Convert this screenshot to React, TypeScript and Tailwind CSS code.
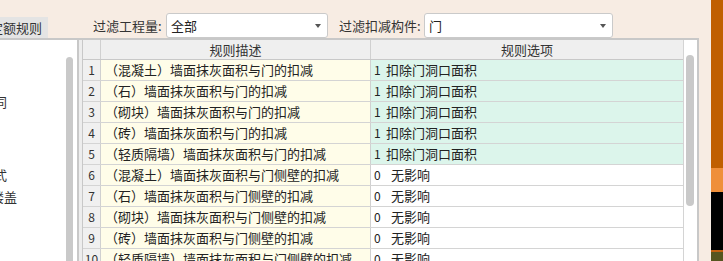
import React from 'react';

const rows = [
  { desc: '（混凝土）墙面抹灰面积与门的扣减', code: '1', opt: '扣除门洞口面积' },
  { desc: '（石）墙面抹灰面积与门的扣减', code: '1', opt: '扣除门洞口面积' },
  { desc: '（砌块）墙面抹灰面积与门的扣减', code: '1', opt: '扣除门洞口面积' },
  { desc: '（砖）墙面抹灰面积与门的扣减', code: '1', opt: '扣除门洞口面积' },
  { desc: '（轻质隔墙）墙面抹灰面积与门的扣减', code: '1', opt: '扣除门洞口面积' },
  { desc: '（混凝土）墙面抹灰面积与门侧壁的扣减', code: '0', opt: '无影响' },
  { desc: '（石）墙面抹灰面积与门侧壁的扣减', code: '0', opt: '无影响' },
  { desc: '（砌块）墙面抹灰面积与门侧壁的扣减', code: '0', opt: '无影响' },
  { desc: '（砖）墙面抹灰面积与门侧壁的扣减', code: '0', opt: '无影响' },
  { desc: '（轻质隔墙）墙面抹灰面积与门侧壁的扣减', code: '0', opt: '无影响' },
];

function Select({ value, width }: { value: string; width: string }) {
  return (
    <div className={`${width} h-[25px] bg-white border border-[#cacaca] rounded-[3px] flex items-center justify-between pl-[4px] pr-[6px]`}>
      <span className="text-[13px] text-[#222]">{value}</span>
      <span className="w-0 h-0 border-l-[3px] border-r-[3px] border-t-[4px] border-l-transparent border-r-transparent border-t-[#555]" />
    </div>
  );
}

export default function App() {
  return (
    <div
      className="w-[723px] h-[261px] overflow-hidden flex bg-[#f7ece3] text-[#222]"
      style={{ fontFamily: '"Noto Sans CJK SC", "Noto Sans", sans-serif' }}
    >
      {/* main */}
      <div className="w-[711px] flex flex-col">
        {/* filter bar */}
        <div className="h-[38px] flex items-end shrink-0">
          <div className="w-[62px] -ml-[14px] h-[21px] bg-[#e4e4e4] flex items-center pl-[4px] text-[13px] text-[#333] whitespace-nowrap">
            定额规则
          </div>
          <div className="flex items-center h-[25px] ml-[45px]">
            <span className="text-[13px] text-[#333] w-[73px]">过滤工程量:</span>
            <Select value="全部" width="w-[162px]" />
            <span className="text-[13px] text-[#333] ml-[11px] w-[85px]">过滤扣减构件:</span>
            <Select value="门" width="w-[189px]" />
          </div>
        </div>

        {/* body */}
        <div className="flex flex-1 w-[699px] border-t-2 border-[#c8c8c8] overflow-hidden">
          {/* left tree */}
          <div className="w-[77px] bg-white flex shrink-0">
            <div className="w-[66px] overflow-hidden text-[13px] text-[#333]">
              <div className="mt-[51px] h-[22px] leading-[22px] -ml-[19px] whitespace-nowrap">相同</div>
              <div className="mt-[51px] h-[22px] leading-[22px] -ml-[19px] whitespace-nowrap">方式</div>
              <div className="h-[22px] leading-[22px] -ml-[9px] whitespace-nowrap">楼盖</div>
            </div>
            <div className="w-[11px]">
              <div className="w-[7px] h-[260px] mt-[17px] rounded-[4px] bg-[#c9c9c9]" />
            </div>
          </div>
          <div className="w-[2px] bg-[#c8c8c8] shrink-0" />
          <div className="w-[3px] bg-[#ededed] shrink-0" />

          {/* table */}
          <div className="flex-1 flex border-l border-[#c8c8c8] bg-white">
            <div className="flex-1 flex flex-col text-[13px]">
              <div className="h-[20px] flex bg-[#efefef] border-b border-[#c8c8c8] shrink-0">
                <div className="w-[18px] border-r border-[#d0d0d0]" />
                <div className="w-[270px] border-r border-[#d0d0d0] flex items-center justify-center text-[#333]">规则描述</div>
                <div className="flex-1 flex items-center justify-center text-[#333]">规则选项</div>
              </div>
              {rows.map((r, i) => (
                <div key={i} className="h-[21px] flex border-b border-[#d4d4d4] shrink-0">
                  <div className="w-[18px] bg-[#f0f0f0] border-r border-[#d0d0d0] flex items-center justify-center text-[12px] text-[#333]">
                    {i + 1}
                  </div>
                  <div className="w-[270px] bg-[#fffde9] border-r border-[#d0d0d0] flex items-center pl-[4px] whitespace-nowrap">
                    {r.desc}
                  </div>
                  <div className={`flex-1 flex items-center pl-[3px] whitespace-nowrap ${r.code === '1' ? 'bg-[#dcf5eb]' : 'bg-white'}`}>
                    <span className="text-[12px] w-[12px]">{r.code}</span>
                    <span className={r.code === '0' ? 'ml-[5px]' : ''}>{r.opt}</span>
                  </div>
                </div>
              ))}
            </div>
            {/* table scrollbar */}
            <div className="w-[14px] bg-white border-l border-[#d4d4d4] shrink-0">
              <div className="w-[8px] h-[151px] ml-[2px] mt-[15px] rounded-[4px] bg-[#c9c9c9]" />
            </div>
          </div>
          <div className="w-[2px] bg-[#c8c8c8] shrink-0" />
        </div>
      </div>

      {/* right edge strip */}
      <div className="w-[12px] flex flex-col">
        <div className="h-[168px] bg-[#c05f00]" />
        <div className="h-[24px] bg-[#ef8f3a]" />
        <div className="h-[58px] bg-black" />
        <div className="h-[2px] bg-[#c06010]" />
        <div className="flex-1 bg-[#55551f]" />
      </div>
    </div>
  );
}
